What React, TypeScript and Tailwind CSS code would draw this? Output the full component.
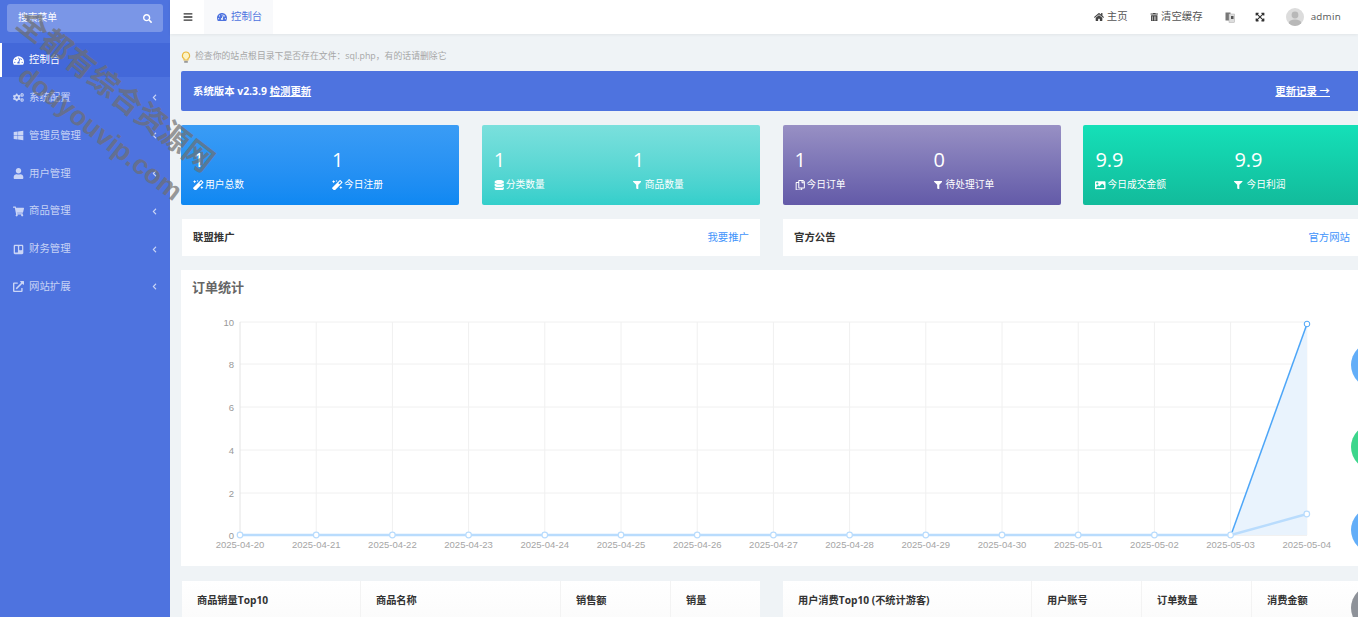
import type { ReactNode } from "react";
import {
  FaBars,
  FaChevronLeft,
  FaCogs,
  FaDatabase,
  FaExpandArrowsAlt,
  FaExternalLinkAlt,
  FaFilter,
  FaHome,
  FaImage,
  FaMagic,
  FaRegCopy,
  FaSearch,
  FaShoppingCart,
  FaTachometerAlt,
  FaTrashAlt,
  FaTrello,
  FaUser,
  FaWindows,
} from "react-icons/fa";

const font = { fontFamily: '"Open Sans", "Noto Sans CJK SC", sans-serif' };

const menus = [
  { label: "系统配置", icon: <FaCogs /> },
  { label: "管理员管理", icon: <FaWindows /> },
  { label: "用户管理", icon: <FaUser /> },
  { label: "商品管理", icon: <FaShoppingCart /> },
  { label: "财务管理", icon: <FaTrello /> },
  { label: "网站扩展", icon: <FaExternalLinkAlt /> },
];

const dates = [
  "2025-04-20", "2025-04-21", "2025-04-22", "2025-04-23", "2025-04-24",
  "2025-04-25", "2025-04-26", "2025-04-27", "2025-04-28", "2025-04-29",
  "2025-04-30", "2025-05-01", "2025-05-02", "2025-05-03", "2025-05-04",
];

function Sidebar() {
  return (
    <aside className="w-[170px] shrink-0 bg-[#4e73df] text-white">
      <div className="h-[43px] px-[7px] pt-1">
        <div className="flex h-7 items-center justify-between rounded-[3px] bg-white/25 pl-[11px] pr-[11px] text-[9.75px]">
          <span>搜索菜单</span>
          <FaSearch className="text-[9px]" />
        </div>
      </div>
      <div className="flex h-[34px] items-center border-l-2 border-white bg-[#4368d9] pl-[11px] text-[10.4px]">
        <span className="w-4 text-[11px]"><FaTachometerAlt /></span>
        <span>控制台</span>
      </div>
      {menus.map((m) => (
        <div key={m.label} className="flex h-[37.8px] translate-y-[2px] items-center pl-[13px] pr-[12px] text-[10.4px] text-white/70">
          <span className="w-4 text-[11px]">{m.icon}</span>
          <span className="flex-1">{m.label}</span>
          <FaChevronLeft className="text-[7px]" />
        </div>
      ))}
    </aside>
  );
}

function Header() {
  return (
    <header className="relative flex h-[34px] items-center bg-white pl-[13px] text-[10.4px] text-[#555] shadow-[0_1px_3px_rgba(0,0,0,0.06)]">
      <FaBars className="text-[10px] text-[#333]" />
      <div className="ml-[11px] flex h-full w-[69px] items-center gap-[4px] bg-[#f8f9fb] pl-[13px] text-[#4e73df]">
        <FaTachometerAlt className="text-[10px]" />
        <span>控制台</span>
      </div>
      <div className="ml-auto flex items-center pr-[17px]">
        <FaHome className="text-[10px] text-[#444]" />
        <span className="ml-[3px]">主页</span>
        <FaTrashAlt className="ml-[22px] text-[8.5px] text-[#444]" />
        <span className="ml-[3px]">清空缓存</span>
        <svg className="ml-[22px]" width="10" height="11" viewBox="0 0 10 11">
          <rect x="0.5" y="0.5" width="5" height="8" fill="#777" />
          <rect x="4" y="2" width="5.5" height="8.5" fill="#ddd" stroke="#aaa" strokeWidth="0.5" />
          <rect x="6" y="4" width="2.5" height="3" fill="#555" />
        </svg>
        <FaExpandArrowsAlt className="ml-[20px] text-[10px] text-[#333]" />
        <div className="ml-[21px] flex h-[18px] w-[18px] items-center justify-center overflow-hidden rounded-full bg-[#dcdcdc]">
          <svg width="18" height="18" viewBox="0 0 18 18">
            <circle cx="9" cy="7" r="3.4" fill="#b8b8b8" />
            <ellipse cx="9" cy="15" rx="6.2" ry="3.4" fill="#b8b8b8" />
          </svg>
        </div>
        <span className="ml-[7px] text-[9.75px] tracking-[0.3px]">admin</span>
      </div>
    </header>
  );
}

function Stat({ value, icon, label }: { value: string; icon: ReactNode; label: string }) {
  return (
    <div>
      <div className="h-[27px] text-[20px] leading-[27px]">{value}</div>
      <div className="mt-[5px] flex items-center text-[9.75px] leading-[14px]">
        <span className="w-[12px] text-[10.5px]">{icon}</span>
        <span>{label}</span>
      </div>
    </div>
  );
}

function StatCard({ className, children }: { className: string; children: ReactNode }) {
  return (
    <div className={`grid h-20 w-[278px] grid-cols-[139px_127px] rounded-[2px] pl-3 pt-[21px] text-white ${className}`}>
      {children}
    </div>
  );
}

function Notice({ title, link }: { title: string; link: string }) {
  return (
    <div className="flex h-[37px] w-[578px] items-center justify-between bg-white px-[11px] pt-px text-[10.4px]">
      <span className="font-bold text-[#333]">{title}</span>
      <span className="text-[#3f94fb]">{link}</span>
    </div>
  );
}

function Chart() {
  const xs = dates.map((_, i) => 240 + i * 76.2);
  const ys = [535, 493, 450, 407, 364, 322];
  return (
    <svg width="1177" height="250" className="block">
      <g transform="translate(-181 -316)">
        {ys.map((y, i) => (
          <g key={y}>
            <line x1="240" x2="1307" y1={y} y2={y} stroke={i === 0 ? "#e4e4e4" : "#f0f0f0"} />
            <text x="234" y={y + 3.5} textAnchor="end" fontSize="9.5" fill="#999" fontFamily="Liberation Sans">{i * 2}</text>
          </g>
        ))}
        {xs.map((x, i) => (
          <g key={x}>
            <line x1={x} x2={x} y1="322" y2="535" stroke={i === 0 ? "#e4e4e4" : "#f0f0f0"} />
            <text x={x} y="548" textAnchor="middle" fontSize="9.5" fill="#a5a5a5" fontFamily="Liberation Sans">{dates[i]}</text>
          </g>
        ))}
        <polygon points="1231,535 1307,324 1307,535" fill="#e9f3fd" />
        <line x1="1231" y1="535" x2="1307" y2="324" stroke="#4da6f8" strokeWidth="1.5" />
        <polyline points="240,535 1231,535 1307,514" fill="none" stroke="#b9dcfd" strokeWidth="2.4" />
        {xs.map((x, i) => (
          <circle key={x} cx={x} cy={i === 14 ? 514 : 535} r="2.8" fill="#fff" stroke="#b9dcfd" strokeWidth="1.2" />
        ))}
        <circle cx="1307" cy="324" r="2.8" fill="#fff" stroke="#4da6f8" strokeWidth="1" />
      </g>
    </svg>
  );
}

function TopTable({ cols }: { cols: { label: string; w: string }[] }) {
  return (
    <div className="flex h-[40px] w-[578px] bg-gradient-to-b from-white to-[#fbfbfb]">
      {cols.map((c, i) => (
        <div
          key={c.label}
          className={`flex h-[40px] items-center pl-[15px] text-[10.2px] font-bold text-[#333] ${i > 0 ? "border-l border-[#f3f3f3]" : ""} ${c.w}`}
        >
          {c.label}
        </div>
      ))}
    </div>
  );
}

const filterIcon = <FaFilter className="text-[8.5px]" />;

export default function App() {
  return (
    <div className="relative flex h-[617px] w-full overflow-hidden bg-[#eff3f6]" style={font}>
      <Sidebar />
      <main className="min-w-0 flex-1">
        <Header />
        <div className="w-[1200px] pl-[11px]">
          <div className="flex h-[37px] items-center pt-[9px] text-[8.85px] text-[#a6a6a6]">
            <svg width="10" height="13" viewBox="0 0 10 13" className="mr-[4px]">
              <path d="M5 1a3.6 3.6 0 0 0-2 6.6V9h4V7.6A3.6 3.6 0 0 0 5 1z" fill="#fdf3c2" stroke="#e9b73a" strokeWidth="1.1" />
              <rect x="3.2" y="9.8" width="3.6" height="2" fill="#999" />
            </svg>
            <span>检查你的站点根目录下是否存在文件：sql.php，有的话请删除它</span>
          </div>
          <div className="flex h-10 items-center justify-between rounded-[2px] bg-[#4e73df] pl-3 pr-[40px] pt-px text-[10.4px] text-white">
            <span className="font-bold">
              系统版本 v2.3.9 <span className="underline">检测更新</span>
            </span>
            <span className="font-bold underline">更新记录 →</span>
          </div>
          <div className="mt-[14px] flex gap-[22.8px]">
            <StatCard className="bg-gradient-to-b from-[#3a9cf5] to-[#0e88f2]">
              <Stat value="1" icon={<FaMagic />} label="用户总数" />
              <Stat value="1" icon={<FaMagic />} label="今日注册" />
            </StatCard>
            <StatCard className="bg-gradient-to-b from-[#7ae0dd] to-[#33cfcb]">
              <Stat value="1" icon={<FaDatabase />} label="分类数量" />
              <Stat value="1" icon={filterIcon} label="商品数量" />
            </StatCard>
            <StatCard className="bg-gradient-to-b from-[#9890c4] to-[#635aa8]">
              <Stat value="1" icon={<FaRegCopy />} label="今日订单" />
              <Stat value="0" icon={filterIcon} label="待处理订单" />
            </StatCard>
            <StatCard className="bg-gradient-to-b from-[#15e0b8] to-[#12bb9b]">
              <Stat value="9.9" icon={<FaImage />} label="今日成交金额" />
              <Stat value="9.9" icon={filterIcon} label="今日利润" />
            </StatCard>
          </div>
          <div className="ml-px mt-[14px] flex gap-[23px]">
            <Notice title="联盟推广" link="我要推广" />
            <Notice title="官方公告" link="官方网站" />
          </div>
          <section className="mt-[14px] h-[296px] bg-white">
            <h2 className="h-[46px] pl-[11px] pt-[8px] text-[13px] font-bold leading-[18px] text-[#666]">订单统计</h2>
            <Chart />
          </section>
          <div className="ml-px mt-[15px] flex gap-[23px]">
            <TopTable
              cols={[
                { label: "商品销量Top10", w: "w-[178px]" },
                { label: "商品名称", w: "w-[200px]" },
                { label: "销售额", w: "w-[110px]" },
                { label: "销量", w: "w-[90px]" },
              ]}
            />
            <TopTable
              cols={[
                { label: "用户消费Top10 (不统计游客)", w: "w-[248px]" },
                { label: "用户账号", w: "w-[110px]" },
                { label: "订单数量", w: "w-[110px]" },
                { label: "消费金额", w: "w-[110px]" },
              ]}
            />
          </div>
        </div>
      </main>

      {/* avatars cut off by the right edge */}
      <div className="absolute left-[1351px] top-[342px] h-[46px] w-[46px] rounded-full bg-[#63aef8]" />
      <div className="absolute left-[1351px] top-[424px] h-[46px] w-[46px] rounded-full bg-[#3dd68c]" />
      <div className="absolute left-[1351px] top-[507px] h-[46px] w-[46px] rounded-full bg-[#63aef8]" />
      <div className="absolute left-[1351px] top-[585px] h-[46px] w-[46px] rounded-full bg-[#8e9299]" />

      {/* site watermark over the picture */}
      <div
        className="pointer-events-none absolute left-[33px] top-[2px] origin-top-left rotate-[38deg] whitespace-nowrap text-[30px] font-bold leading-[34px] text-[#6e6e6e]/70"
        style={{ fontFamily: '"Noto Sans CJK SC", sans-serif' }}
      >
        全都有综合资源网
      </div>
      <div
        className="pointer-events-none absolute left-[31px] top-[60px] origin-top-left rotate-[38deg] whitespace-nowrap text-[27px] font-bold leading-[30px] text-[#6e6e6e]/70"
        style={{ fontFamily: '"Liberation Sans", sans-serif' }}
      >
        douyouvip.com
      </div>
    </div>
  );
}
